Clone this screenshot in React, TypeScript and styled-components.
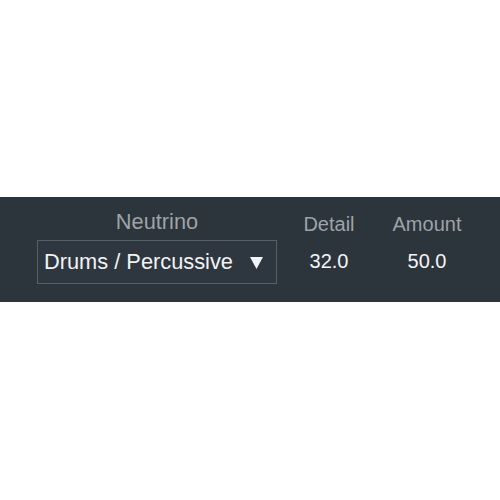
import React from 'react';
import styled, { createGlobalStyle } from 'styled-components';

const GlobalStyle = createGlobalStyle`
  body {
    margin: 0;
    background: #ffffff;
    font-family: "Liberation Sans", Arial, sans-serif;
  }
`;

const Panel = styled.div`
  margin-top: 197px;
  height: 105px;
  background: #2c343c;
  display: flex;
  align-items: flex-start;
  padding-left: 37px;
  box-sizing: border-box;
`;

const PresetColumn = styled.div`
  display: flex;
  flex-direction: column;
  align-items: center;
  padding-top: 10px;
  width: 240px;
`;

const Label = styled.div<{ $size?: number }>`
  color: #9ea3a8;
  font-size: ${(p) => p.$size ?? 20}px;
  line-height: ${(p) => (p.$size ? 30 : 28)}px;
  white-space: nowrap;
`;

const Dropdown = styled.div`
  margin-top: 3px;
  width: 240px;
  height: 44px;
  box-sizing: border-box;
  border: 1px solid #575f68;
  background: #2e363f;
  display: flex;
  align-items: center;
  justify-content: space-between;
  padding: 0 13px 0 6px;
  color: #f2f3f4;
  font-size: 21.8px;
`;

const Arrow = styled.svg`
  width: 13px;
  height: 12px;
  margin-top: 2px;
`;

const ParamColumn = styled.div<{ $first?: boolean }>`
  width: 98px;
  margin-left: ${(p) => (p.$first ? 3 : 0)}px;
  display: flex;
  flex-direction: column;
  align-items: center;
  padding-top: 13px;
`;

const Value = styled.div`
  margin-top: 9px;
  color: #f4f5f6;
  font-size: 20px;
  line-height: 28px;
`;

const params = [
  { name: 'Detail', value: '32.0' },
  { name: 'Amount', value: '50.0' },
];

export default function App() {
  return (
    <>
      <GlobalStyle />
      <Panel>
        <PresetColumn>
          <Label $size={21.8}>Neutrino</Label>
          <Dropdown>
            <span>Drums / Percussive</span>
            <Arrow viewBox="0 0 13 12">
              <polygon points="0,0 13,0 6.5,12" fill="#f2f3f4" />
            </Arrow>
          </Dropdown>
        </PresetColumn>
        {params.map((p, i) => (
          <ParamColumn key={p.name} $first={i === 0}>
            <Label>{p.name}</Label>
            <Value>{p.value}</Value>
          </ParamColumn>
        ))}
      </Panel>
    </>
  );
}
